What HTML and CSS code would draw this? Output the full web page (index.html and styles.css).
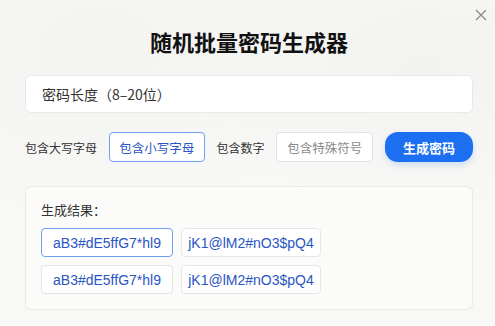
FILE: index.html
```html
<!DOCTYPE html>
<html lang="zh-CN">
<head>
  <meta charset="UTF-8">
  <meta name="viewport" content="width=device-width, initial-scale=1.0">
  <title>随机批量密码生成器</title>
  <link rel="stylesheet" href="styles.css">
</head>
<body>
  <div class="dialog">
    <button class="close" aria-label="关闭">
      <svg width="12" height="12" viewBox="0 0 12 12">
        <path d="M1 1 L11 11 M11 1 L1 11" stroke="#8a8a8a" stroke-width="1.3" fill="none"/>
      </svg>
    </button>
    <h1>随机批量密码生成器</h1>

    <div class="length-input">密码长度（8–20位）</div>

    <div class="options">
      <span class="opt-text">包含大写字母</span>
      <span class="opt-box active">包含小写字母</span>
      <span class="opt-text">包含数字</span>
      <span class="opt-box">包含特殊符号</span>
      <button class="generate">生成密码</button>
    </div>

    <div class="result">
      <div class="result-title">生成结果：</div>
      <div class="chips">
        <span class="chip selected">aB3#dE5ffG7*hl9</span>
        <span class="chip">jK1@lM2#nO3$pQ4</span>
        <span class="chip">aB3#dE5ffG7*hl9</span>
        <span class="chip">jK1@lM2#nO3$pQ4</span>
      </div>
    </div>
  </div>
</body>
</html>
```

FILE: styles.css
```css
:root {
  --blue: #1b6ff0;
  --blue-text: #2a55c4;
  --text-color: #262626;
  --line: #e9e9e7;
}
html, body {
  margin: 0;
  height: 100%;
}
body {
  font-family: "Noto Sans CJK SC", "Liberation Sans", sans-serif;
  color: var(--text-color);
  background: radial-gradient(ellipse at 20% 15%, #f3f3f1 0%, transparent 45%),
              radial-gradient(ellipse at 85% 20%, #f2f2f0 0%, transparent 40%),
              #f8f8f6;
}
.dialog {
  position: relative;
  padding: 25px 22px 0 25px;
}
.close {
  position: absolute;
  top: 9px;
  right: 8px;
  border: none;
  background: none;
  padding: 0;
  width: 12px;
  height: 12px;
  cursor: pointer;
}
.close svg { display: block; }
h1 {
  margin: 0 0 18px;
  text-align: center;
  font-size: 22px;
  line-height: 32px;
  font-weight: 700;
  color: #111;
}
.length-input {
  height: 38px;
  box-sizing: border-box;
  border: 1px solid var(--line);
  border-radius: 6px;
  background: #fff;
  padding: 0 16px;
  display: flex;
  align-items: center;
  font-size: 14px;
  color: #333;
}
.options {
  display: flex;
  align-items: center;
  justify-content: space-between;
  margin-top: 19px;
  height: 30px;
  font-size: 12px;
}
.opt-text { color: #333; }
.opt-box {
  height: 30px;
  box-sizing: border-box;
  width: 97px;
  display: flex;
  align-items: center;
  justify-content: center;
  border: 1px solid #e3e3e3;
  border-radius: 4px;
  background: #fff;
  color: #8a8a8a;
  font-size: 12.5px;
}
.opt-box.active {
  width: 96px;
  border-color: #6f9ff0;
  color: var(--blue-text);
}
.generate {
  width: 88px;
  height: 30px;
  border: none;
  border-radius: 13px;
  background: var(--blue);
  color: #fff;
  font-family: inherit;
  font-size: 13px;
  font-weight: 700;
  box-shadow: 0 3px 6px rgba(27, 111, 240, 0.18);
  cursor: pointer;
}
.result {
  margin-top: 24px;
  height: 124px;
  box-sizing: border-box;
  border: 1px solid var(--line);
  border-radius: 6px;
  background: #fbfbfa;
  padding: 14px 15px;
}
.result-title {
  font-size: 13px;
  line-height: 18px;
  color: #333;
}
.chips {
  margin-top: 9px;
  display: grid;
  grid-template-columns: 132px 140px;
  gap: 8px;
}
.chip {
  height: 29px;
  box-sizing: border-box;
  display: flex;
  align-items: center;
  justify-content: center;
  border: 1px solid #e6e6e6;
  border-radius: 4px;
  background: #fff;
  font-family: "Liberation Sans", Arial, sans-serif;
  font-size: 14px;
  color: var(--blue-text);
}
.chip.selected { border-color: #6f9ff0; }
```
